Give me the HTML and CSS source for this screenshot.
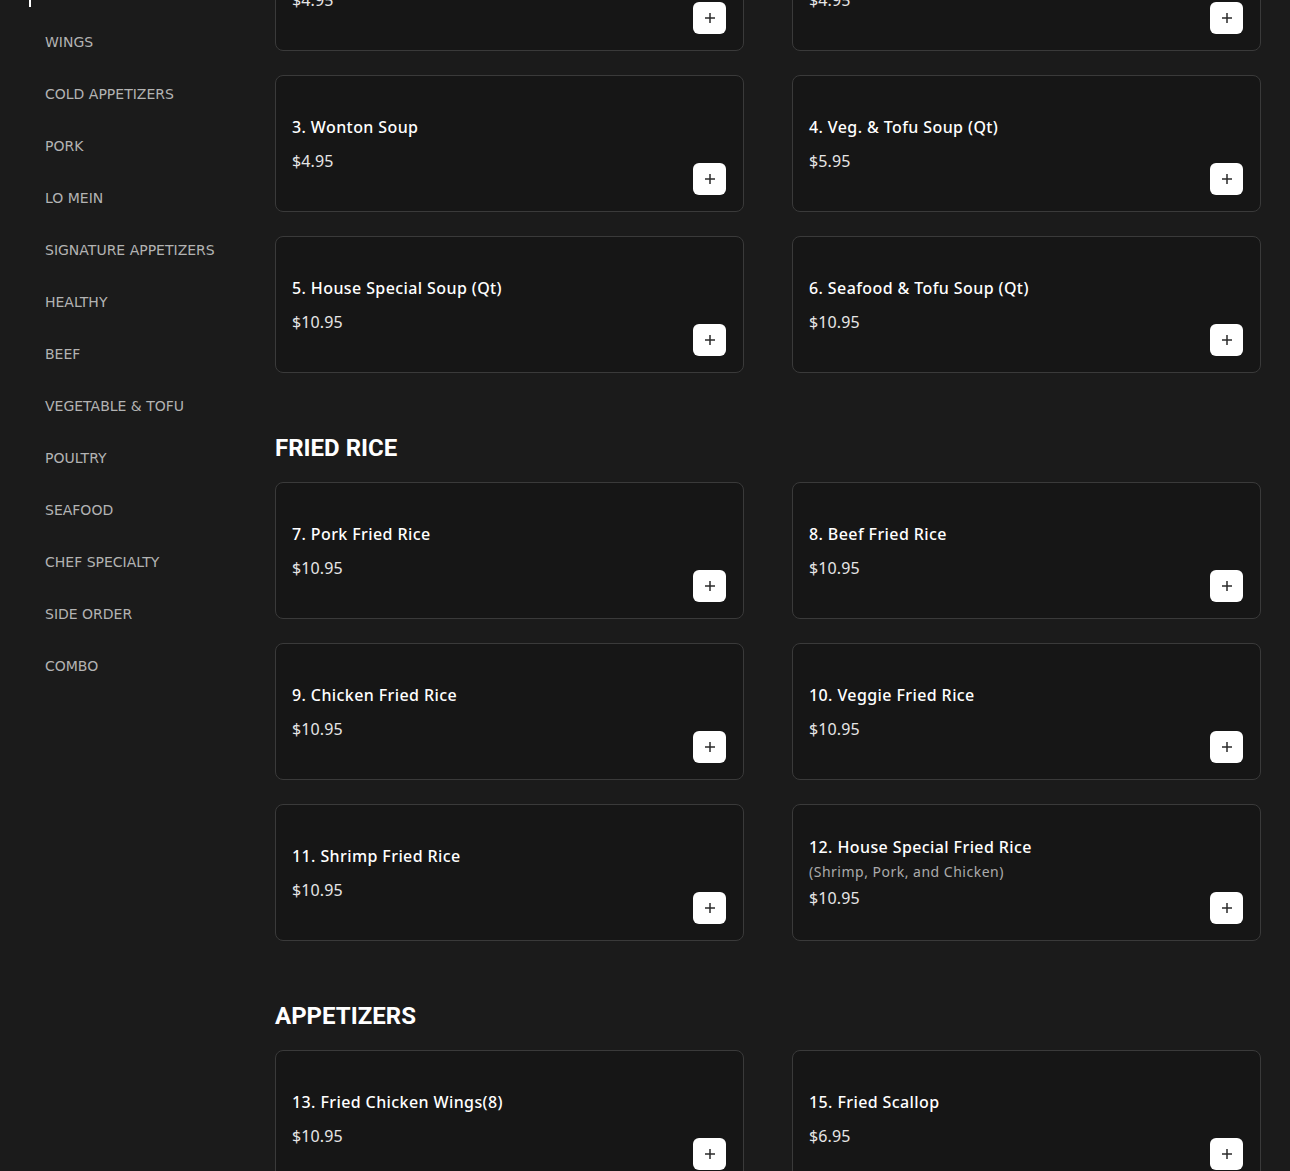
FILE: index.html
```html
<!DOCTYPE html>
<html lang="en">
<head>
<meta charset="utf-8">
<title>Menu</title>
<link rel="stylesheet" href="styles.css">
</head>
<body>
<div class="page">
  <aside class="sidebar">
    <nav class="nav">
      <a class="nav-item">SOUP</a>
      <a class="nav-item">FRIED RICE</a>
      <a class="nav-item active">APPETIZERS</a>
      <a class="nav-item">WINGS</a>
      <a class="nav-item">COLD APPETIZERS</a>
      <a class="nav-item">PORK</a>
      <a class="nav-item">LO MEIN</a>
      <a class="nav-item">SIGNATURE APPETIZERS</a>
      <a class="nav-item">HEALTHY</a>
      <a class="nav-item">BEEF</a>
      <a class="nav-item">VEGETABLE &amp; TOFU</a>
      <a class="nav-item">POULTRY</a>
      <a class="nav-item">SEAFOOD</a>
      <a class="nav-item">CHEF SPECIALTY</a>
      <a class="nav-item">SIDE ORDER</a>
      <a class="nav-item">COMBO</a>
    </nav>
  </aside>
  <main class="main">
    <section class="section first">
      <h2 class="section-title">SOUP</h2>
      <div class="grid">
        <div class="card"><div class="info"><div class="name">1. Egg Drop Soup</div><div class="price">$4.95</div></div><button class="add"><svg viewBox="0 0 12 12" width="12" height="12"><path d="M6 1v10M1 6h10" stroke="#2b2b2b" stroke-width="1.5"/></svg></button></div>
        <div class="card"><div class="info"><div class="name">2. Hot &amp; Sour Soup</div><div class="price">$4.95</div></div><button class="add"><svg viewBox="0 0 12 12" width="12" height="12"><path d="M6 1v10M1 6h10" stroke="#2b2b2b" stroke-width="1.5"/></svg></button></div>
        <div class="card"><div class="info"><div class="name">3. Wonton Soup</div><div class="price">$4.95</div></div><button class="add"><svg viewBox="0 0 12 12" width="12" height="12"><path d="M6 1v10M1 6h10" stroke="#2b2b2b" stroke-width="1.5"/></svg></button></div>
        <div class="card"><div class="info"><div class="name">4. Veg. &amp; Tofu Soup (Qt)</div><div class="price">$5.95</div></div><button class="add"><svg viewBox="0 0 12 12" width="12" height="12"><path d="M6 1v10M1 6h10" stroke="#2b2b2b" stroke-width="1.5"/></svg></button></div>
        <div class="card"><div class="info"><div class="name">5. House Special Soup (Qt)</div><div class="price">$10.95</div></div><button class="add"><svg viewBox="0 0 12 12" width="12" height="12"><path d="M6 1v10M1 6h10" stroke="#2b2b2b" stroke-width="1.5"/></svg></button></div>
        <div class="card"><div class="info"><div class="name">6. Seafood &amp; Tofu Soup (Qt)</div><div class="price">$10.95</div></div><button class="add"><svg viewBox="0 0 12 12" width="12" height="12"><path d="M6 1v10M1 6h10" stroke="#2b2b2b" stroke-width="1.5"/></svg></button></div>
      </div>
    </section>
    <section class="section">
      <h2 class="section-title">FRIED RICE</h2>
      <div class="grid">
        <div class="card"><div class="info"><div class="name">7. Pork Fried Rice</div><div class="price">$10.95</div></div><button class="add"><svg viewBox="0 0 12 12" width="12" height="12"><path d="M6 1v10M1 6h10" stroke="#2b2b2b" stroke-width="1.5"/></svg></button></div>
        <div class="card"><div class="info"><div class="name">8. Beef Fried Rice</div><div class="price">$10.95</div></div><button class="add"><svg viewBox="0 0 12 12" width="12" height="12"><path d="M6 1v10M1 6h10" stroke="#2b2b2b" stroke-width="1.5"/></svg></button></div>
        <div class="card"><div class="info"><div class="name">9. Chicken Fried Rice</div><div class="price">$10.95</div></div><button class="add"><svg viewBox="0 0 12 12" width="12" height="12"><path d="M6 1v10M1 6h10" stroke="#2b2b2b" stroke-width="1.5"/></svg></button></div>
        <div class="card"><div class="info"><div class="name">10. Veggie Fried Rice</div><div class="price">$10.95</div></div><button class="add"><svg viewBox="0 0 12 12" width="12" height="12"><path d="M6 1v10M1 6h10" stroke="#2b2b2b" stroke-width="1.5"/></svg></button></div>
        <div class="card"><div class="info"><div class="name">11. Shrimp Fried Rice</div><div class="price">$10.95</div></div><button class="add"><svg viewBox="0 0 12 12" width="12" height="12"><path d="M6 1v10M1 6h10" stroke="#2b2b2b" stroke-width="1.5"/></svg></button></div>
        <div class="card"><div class="info"><div class="name">12. House Special Fried Rice</div><div class="desc">(Shrimp, Pork, and Chicken)</div><div class="price">$10.95</div></div><button class="add"><svg viewBox="0 0 12 12" width="12" height="12"><path d="M6 1v10M1 6h10" stroke="#2b2b2b" stroke-width="1.5"/></svg></button></div>
      </div>
    </section>
    <section class="section">
      <h2 class="section-title">APPETIZERS</h2>
      <div class="grid">
        <div class="card"><div class="info"><div class="name">13. Fried Chicken Wings(8)</div><div class="price">$10.95</div></div><button class="add"><svg viewBox="0 0 12 12" width="12" height="12"><path d="M6 1v10M1 6h10" stroke="#2b2b2b" stroke-width="1.5"/></svg></button></div>
        <div class="card"><div class="info"><div class="name">15. Fried Scallop</div><div class="price">$6.95</div></div><button class="add"><svg viewBox="0 0 12 12" width="12" height="12"><path d="M6 1v10M1 6h10" stroke="#2b2b2b" stroke-width="1.5"/></svg></button></div>
      </div>
    </section>
  </main>
</div>
</body>
</html>
```
FILE: styles.css
```css
html, body {
  margin: 0;
  padding: 0;
  background: #1b1b1b;
  overflow: hidden;
}

.page {
  display: flex;
  align-items: flex-start;
  margin-top: -162px;
}

.sidebar {
  width: 275px;
  flex: 0 0 275px;
  padding-top: 22px;
  box-sizing: border-box;
}

.nav {
  display: flex;
  flex-direction: column;
}

.nav-item {
  position: relative;
  display: block;
  margin-left: 29px;
  padding-left: 16px;
  height: 52px;
  line-height: 52px;
  font-family: "DejaVu Sans", sans-serif;
  font-size: 14px;
  color: #b3b3b3;
  white-space: nowrap;
}

.nav-item.active::before {
  content: "";
  position: absolute;
  left: 0;
  top: 9px;
  width: 2px;
  height: 34px;
  background: #ffffff;
}

.main {
  flex: 1;
  padding: 24px 29px 40px 0;
}

.section + .section {
  margin-top: 57px;
}

.section-title {
  margin: 0 0 16px;
  font-family: Roboto, "Liberation Sans", sans-serif;
  font-weight: 700;
  font-size: 24px;
  line-height: 36px;
  color: #ffffff;
}

.grid {
  display: grid;
  grid-template-columns: 1fr 1fr;
  column-gap: 48px;
  row-gap: 24px;
}

.card {
  box-sizing: border-box;
  height: 137px;
  display: flex;
  justify-content: space-between;
  align-items: center;
  padding: 16px 16px 16px 16px;
  background: #161616;
  border: 1px solid #3a3a3a;
  border-radius: 8px;
}

.info {
  display: flex;
  flex-direction: column;
}

.name {
  font-family: "Noto Sans", sans-serif;
  font-weight: 500;
  font-size: 16px;
  line-height: 24px;
  letter-spacing: 0.4px;
  color: #ffffff;
}

.desc {
  margin-top: 3px;
  font-family: "Noto Sans", sans-serif;
  font-size: 14px;
  line-height: 20px;
  letter-spacing: 0.5px;
  color: #ababab;
}

.price {
  margin-top: 10px;
  font-family: "Noto Sans", sans-serif;
  font-size: 16px;
  line-height: 24px;
  letter-spacing: 0.1px;
  color: #e6e6e6;
}

.desc + .price {
  margin-top: 4px;
}

.add {
  align-self: flex-end;
  width: 33px;
  height: 32px;
  margin-right: 1px;
  padding: 0;
  border: none;
  border-radius: 6px;
  background: #ffffff;
  display: flex;
  align-items: center;
  justify-content: center;
  cursor: pointer;
}

.add svg {
  display: block;
}
```
